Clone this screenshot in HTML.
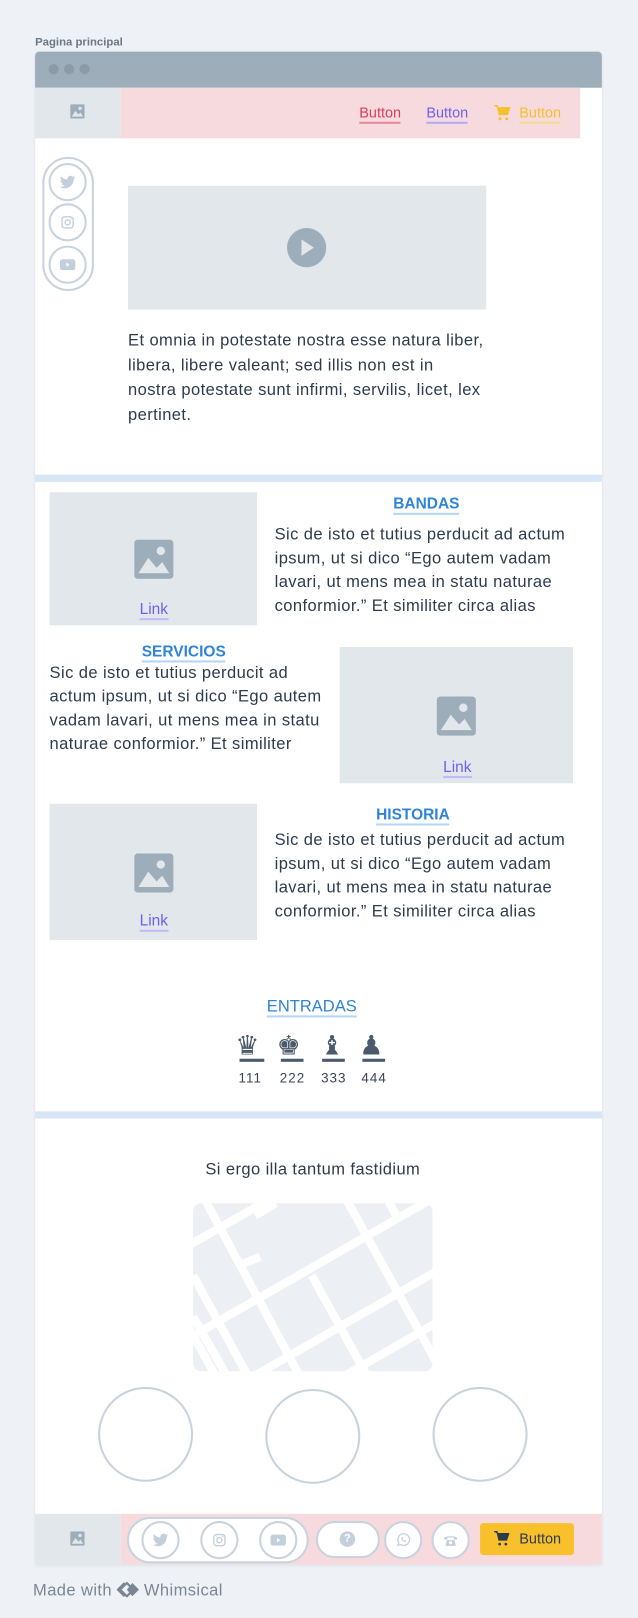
<!DOCTYPE html>
<html><head><meta charset="utf-8"><style>
*{margin:0;padding:0;box-sizing:border-box}
html,body{width:638px;height:1618px;overflow:hidden;background:#eef2f6;font-family:"Liberation Sans",sans-serif}
#w{position:absolute;left:0;top:0;width:618px;height:1568px;transform:scale(1.03236,1.0319);transform-origin:0 0}
.a{position:absolute}
.t{position:absolute;white-space:nowrap;color:#2d3b4c;font-size:16px;letter-spacing:0.4px;line-height:23px}
.img{position:absolute;background:#e2e7ec}
.lk{position:absolute;color:#6e5ff0;font-size:15px;border-bottom:2px solid #c2b8fb;line-height:16px;transform:translateX(-50%)}
.h{position:absolute;color:#2f84d8;font-weight:bold;font-size:15px;border-bottom:2px solid #b6d6f5;line-height:16px;transform:translateX(-50%)}
.c{position:absolute;border:2px solid #c8d3de;border-radius:50%;background:#fff}
</style></head><body><div id="w">
<div class="a" style="left:34px;top:35px;font-size:11px;font-weight:bold;color:#6b7785">Pagina principal</div>
<div class="a" style="left:34px;top:50px;width:549px;height:1466px;background:#fff;box-shadow:0 1px 3px rgba(0,0,0,.08);border-radius:4px 4px 0 0"></div>
<div class="a" style="left:34px;top:50px;width:549px;height:35px;background:#9eadba;border-radius:4px 4px 0 0"></div>
<div class="a" style="left:47px;top:62px;width:10px;height:10px;border-radius:50%;background:#8d9ba9"></div>
<div class="a" style="left:62px;top:62px;width:10px;height:10px;border-radius:50%;background:#8d9ba9"></div>
<div class="a" style="left:77px;top:62px;width:10px;height:10px;border-radius:50%;background:#8d9ba9"></div>
<!-- header -->
<div class="img" style="left:34px;top:85px;width:83px;height:49px"></div>
<svg class="a" style="left:68px;top:101px" width="14" height="14" viewBox="0 0 14 14"><rect width="14" height="14" rx="1.5" fill="#9eadba"/><circle cx="9.5" cy="4" r="1.6" fill="#e2e7ec"/><path d="M1.5 12 L5 6.5 L8 10 L10 8 L12.5 12Z" fill="#e2e7ec"/></svg>
<div class="a" style="left:117px;top:85px;width:445px;height:49px;background:#f6dade"></div>
<div class="a" style="left:348px;top:101px;font-size:14px;color:#d9405a;border-bottom:2px solid #e98a9b;line-height:17px">Button</div>
<div class="a" style="left:413px;top:101px;font-size:14px;color:#6e5ff0;border-bottom:2px solid #b3a8fb;line-height:17px">Button</div>
<svg class="a" style="left:478px;top:101px" width="17" height="17" viewBox="0 0 24 24"><path d="M1 2h4l1 3h16l-3 9H8L6 5" fill="#f5c02a" stroke="#f5c02a" stroke-width="2"/><circle cx="9" cy="20" r="2" fill="#f5c02a"/><circle cx="18" cy="20" r="2" fill="#f5c02a"/></svg>
<div class="a" style="left:503px;top:101px;font-size:14px;color:#f5c02a;border-bottom:2px solid #f8dc8e;line-height:17px">Button</div>
<!-- social vertical -->
<div class="a" style="left:41px;top:152px;width:50px;height:130px;border:2px solid #c8d3de;border-radius:25px"></div>
<div class="c" style="left:47px;top:158px;width:37px;height:37px"></div>
<div class="c" style="left:47px;top:197px;width:37px;height:37px"></div>
<div class="c" style="left:47px;top:238px;width:37px;height:37px"></div>
<svg class="a" style="left:58px;top:170px" width="15" height="13" viewBox="0 0 24 20"><path d="M24 2.4a10 10 0 0 1-2.8.8A5 5 0 0 0 23.3.5a10 10 0 0 1-3.1 1.2A4.9 4.9 0 0 0 11.8 6 14 14 0 0 1 1.7.9a4.9 4.9 0 0 0 1.5 6.6A4.9 4.9 0 0 1 1 6.9a4.9 4.9 0 0 0 3.9 4.8 5 5 0 0 1-2.2.1 4.9 4.9 0 0 0 4.6 3.4A9.9 9.9 0 0 1 0 17.3 14 14 0 0 0 7.5 19.5c9 0 14-7.5 14-14v-.6A10 10 0 0 0 24 2.4z" fill="#c3cfdb"/></svg>
<svg class="a" style="left:59px;top:209px" width="13" height="13" viewBox="0 0 24 24"><rect x="2" y="2" width="20" height="20" rx="5" fill="none" stroke="#c3cfdb" stroke-width="2.5"/><circle cx="12" cy="12" r="4.5" fill="none" stroke="#c3cfdb" stroke-width="2.5"/><circle cx="18" cy="6" r="1.3" fill="#c3cfdb"/></svg>
<svg class="a" style="left:58px;top:251px" width="15" height="11" viewBox="0 0 24 17"><rect width="24" height="17" rx="4" fill="#c3cfdb"/><path d="M10 5l5 3.5-5 3.5z" fill="#fff"/></svg>
<!-- video -->
<div class="img" style="left:124px;top:180px;width:347px;height:120px"></div>
<div class="a" style="left:278px;top:221px;width:38px;height:38px;border-radius:50%;background:#9eadba"></div>
<svg class="a" style="left:292px;top:232px" width="12" height="16" viewBox="0 0 12 16"><path d="M0 0L12 8L0 16Z" fill="#e2e7ec"/></svg>
<div class="t" style="left:124px;top:319px;line-height:24px">Et omnia in potestate nostra esse natura liber,<br>libera, libere valeant; sed illis non est in<br>nostra potestate sunt infirmi, servilis, licet, lex<br>pertinet.</div>
<!-- divider -->
<div class="a" style="left:34px;top:460px;width:549px;height:7px;background:#d6e6f6"></div>
<!-- section 1 -->
<div class="img" style="left:48px;top:477px;width:201px;height:129px"></div>
<svg class="a" style="left:130px;top:523px" width="38" height="38" viewBox="0 0 14 14"><rect width="14" height="14" rx="1.3" fill="#9eadba"/><circle cx="9.5" cy="4" r="1.5" fill="#e2e7ec"/><path d="M1.5 12 L5 6.5 L8 10 L10 8 L12.5 12Z" fill="#e2e7ec"/></svg>
<div class="lk" style="left:149px;top:583px">Link</div>
<div class="h" style="left:413px;top:481px">BANDAS</div>
<div class="t" style="left:266px;top:507px">Sic de isto et tutius perducit ad actum<br>ipsum, ut si dico “Ego autem vadam<br>lavari, ut mens mea in statu naturae<br>conformior.” Et similiter circa alias</div>
<!-- section 2 -->
<div class="h" style="left:178px;top:624px">SERVICIOS</div>
<div class="t" style="left:48px;top:641px">Sic de isto et tutius perducit ad<br>actum ipsum, ut si dico “Ego autem<br>vadam lavari, ut mens mea in statu<br>naturae conformior.” Et similiter</div>
<div class="img" style="left:329px;top:627px;width:226px;height:132px"></div>
<svg class="a" style="left:423px;top:675px" width="38" height="38" viewBox="0 0 14 14"><rect width="14" height="14" rx="1.3" fill="#9eadba"/><circle cx="9.5" cy="4" r="1.5" fill="#e2e7ec"/><path d="M1.5 12 L5 6.5 L8 10 L10 8 L12.5 12Z" fill="#e2e7ec"/></svg>
<div class="lk" style="left:443px;top:736px">Link</div>
<!-- section 3 -->
<div class="img" style="left:48px;top:779px;width:201px;height:132px"></div>
<svg class="a" style="left:130px;top:827px" width="38" height="38" viewBox="0 0 14 14"><rect width="14" height="14" rx="1.3" fill="#9eadba"/><circle cx="9.5" cy="4" r="1.5" fill="#e2e7ec"/><path d="M1.5 12 L5 6.5 L8 10 L10 8 L12.5 12Z" fill="#e2e7ec"/></svg>
<div class="lk" style="left:149px;top:885px">Link</div>
<div class="h" style="left:400px;top:782px">HISTORIA</div>
<div class="t" style="left:266px;top:803px">Sic de isto et tutius perducit ad actum<br>ipsum, ut si dico “Ego autem vadam<br>lavari, ut mens mea in statu naturae<br>conformior.” Et similiter circa alias</div>
<!-- entradas -->
<div class="h" style="left:302px;top:968px;font-weight:normal;font-size:16px">ENTRADAS</div>
<div class="a" style="left:228px;top:999px;width:150px;font-family:'DejaVu Sans',sans-serif;font-size:26px;color:#4a5a6c;line-height:30px;white-space:nowrap"><span style="position:absolute;left:0px">♛</span><span style="position:absolute;left:40px">♚</span><span style="position:absolute;left:82px">♝</span><span style="position:absolute;left:120px">♟</span></div>
<div class="a" style="left:232px;top:1026px;width:24px;height:3px;background:#4a5a6c"></div>
<div class="a" style="left:272px;top:1026px;width:22px;height:3px;background:#4a5a6c"></div>
<div class="a" style="left:312px;top:1026px;width:22px;height:3px;background:#4a5a6c"></div>
<div class="a" style="left:351px;top:1026px;width:22px;height:3px;background:#4a5a6c"></div>
<div class="a" style="left:228px;top:1037px;font-size:13px;letter-spacing:1px;color:#3a4656;white-space:nowrap;width:160px"><span style="position:absolute;left:3px">111</span><span style="position:absolute;left:43px">222</span><span style="position:absolute;left:83px">333</span><span style="position:absolute;left:122px">444</span></div>
<!-- divider -->
<div class="a" style="left:34px;top:1077px;width:549px;height:7px;background:#d6e6f6"></div>
<div class="a" style="left:0;top:1125px;width:606px;text-align:center;font-size:16px;letter-spacing:0.4px;color:#2d3b4c">Si ergo illa tantum fastidium</div>
<svg class="a" style="left:187px;top:1166px" width="232" height="163" viewBox="0 0 232 163"><defs><clipPath id="cp"><rect width="232" height="163" rx="8"/></clipPath></defs><g clip-path="url(#cp)"><rect width="232" height="163" fill="#eceff3"/><g stroke="#fff" stroke-width="8"><line x1="-20" y1="50" x2="120" y2="-30"/><line x1="-20" y1="140" x2="250" y2="-15"/><line x1="20" y1="190" x2="260" y2="52"/><line x1="90" y1="200" x2="260" y2="102"/><line x1="8" y1="-10" x2="110" y2="180"/><line x1="45" y1="60" x2="65" y2="52"/><line x1="-10" y1="110" x2="40" y2="200"/><line x1="80" y1="0" x2="60" y2="12"/><line x1="145" y1="-10" x2="250" y2="180"/><line x1="185" y1="-10" x2="200" y2="18"/><line x1="60" y1="180" x2="0" y2="70"/><line x1="115" y1="70" x2="170" y2="170"/><line x1="40" y1="180" x2="0" y2="110"/></g></g></svg>
<div class="c" style="left:95px;top:1344px;width:92px;height:92px"></div>
<div class="c" style="left:257px;top:1346px;width:92px;height:92px"></div>
<div class="c" style="left:419px;top:1344px;width:92px;height:92px"></div>
<!-- footer -->
<div class="img" style="left:34px;top:1467px;width:83px;height:49px"></div>
<svg class="a" style="left:68px;top:1484px" width="14" height="14" viewBox="0 0 14 14"><rect width="14" height="14" rx="1.5" fill="#9eadba"/><circle cx="9.5" cy="4" r="1.6" fill="#e2e7ec"/><path d="M1.5 12 L5 6.5 L8 10 L10 8 L12.5 12Z" fill="#e2e7ec"/></svg>
<div class="a" style="left:117px;top:1467px;width:466px;height:49px;background:#f6dade"></div>
<div class="a" style="left:123px;top:1470px;width:176px;height:45px;border:2px solid #c8d3de;border-radius:23px;background:#fff"></div>
<div class="c" style="left:137px;top:1474px;width:37px;height:37px"></div>
<div class="c" style="left:194px;top:1474px;width:37px;height:37px"></div>
<div class="c" style="left:251px;top:1474px;width:37px;height:37px"></div>
<svg class="a" style="left:148px;top:1486px" width="15" height="13" viewBox="0 0 24 20"><path d="M24 2.4a10 10 0 0 1-2.8.8A5 5 0 0 0 23.3.5a10 10 0 0 1-3.1 1.2A4.9 4.9 0 0 0 11.8 6 14 14 0 0 1 1.7.9a4.9 4.9 0 0 0 1.5 6.6A4.9 4.9 0 0 1 1 6.9a4.9 4.9 0 0 0 3.9 4.8 5 5 0 0 1-2.2.1 4.9 4.9 0 0 0 4.6 3.4A9.9 9.9 0 0 1 0 17.3 14 14 0 0 0 7.5 19.5c9 0 14-7.5 14-14v-.6A10 10 0 0 0 24 2.4z" fill="#c3cfdb"/></svg>
<svg class="a" style="left:206px;top:1486px" width="13" height="13" viewBox="0 0 24 24"><rect x="2" y="2" width="20" height="20" rx="5" fill="none" stroke="#c3cfdb" stroke-width="2.5"/><circle cx="12" cy="12" r="4.5" fill="none" stroke="#c3cfdb" stroke-width="2.5"/><circle cx="18" cy="6" r="1.3" fill="#c3cfdb"/></svg>
<svg class="a" style="left:262px;top:1487px" width="15" height="11" viewBox="0 0 24 17"><rect width="24" height="17" rx="4" fill="#c3cfdb"/><path d="M10 5l5 3.5-5 3.5z" fill="#fff"/></svg>
<div class="a" style="left:306px;top:1474px;width:62px;height:36px;border:2px solid #c8d3de;border-radius:18px;background:#fff"></div>
<div class="a" style="left:329px;top:1484px;width:15px;height:15px;border-radius:50%;background:#c3cfdb;color:#fff;font-size:11px;font-weight:bold;text-align:center;line-height:15px">?</div>
<div class="c" style="left:372px;top:1474px;width:37px;height:37px"></div>
<svg class="a" style="left:383px;top:1485px" width="15" height="15" viewBox="0 0 24 24"><path d="M4 20l1.3-4A9 9 0 1 1 8.5 19z" fill="none" stroke="#c3cfdb" stroke-width="2"/><path d="M9 8c0 4 3 7 7 7l1-2-2-1-1 1c-1.5-.5-2.5-1.5-3-3l1-1-1-2z" fill="#c3cfdb"/></svg>
<div class="c" style="left:418px;top:1474px;width:37px;height:37px"></div>
<svg class="a" style="left:429px;top:1485px" width="15" height="15" viewBox="0 0 24 24"><path d="M2 9c0-4 20-4 20 0v2h-5V8H7v3H2z" fill="#c3cfdb"/><path d="M6 12h12l2 9H4z" fill="#c3cfdb"/><circle cx="12" cy="16" r="2.5" fill="#fff"/></svg>
<div class="a" style="left:465px;top:1476px;width:91px;height:31px;background:#f8c12c;border-radius:3px"></div>
<svg class="a" style="left:478px;top:1483px" width="16" height="16" viewBox="0 0 24 24"><path d="M1 2h4l1 3h16l-3 9H8L6 5" fill="#2d3b4c" stroke="#2d3b4c" stroke-width="2"/><circle cx="9" cy="20" r="2" fill="#2d3b4c"/><circle cx="18" cy="20" r="2" fill="#2d3b4c"/></svg>
<div class="a" style="left:503px;top:1483px;font-size:14px;color:#2d3b4c;line-height:17px">Button</div>
<div class="a" style="left:32px;top:1533px;font-size:16px;letter-spacing:0.4px;color:#7a8694;white-space:nowrap">Made with <span style="display:inline-block;width:26px;vertical-align:-2px"><svg width="24" height="15" viewBox="0 0 22 14"><path d="M7 1L1 7l6 6M9 1l6 6-6 6-6-6z" fill="none" stroke="#7a8694" stroke-width="2"/><path d="M14 1l6 6-6 6-5-6z" fill="#7a8694"/></svg></span>Whimsical</div>
</div></body></html>
